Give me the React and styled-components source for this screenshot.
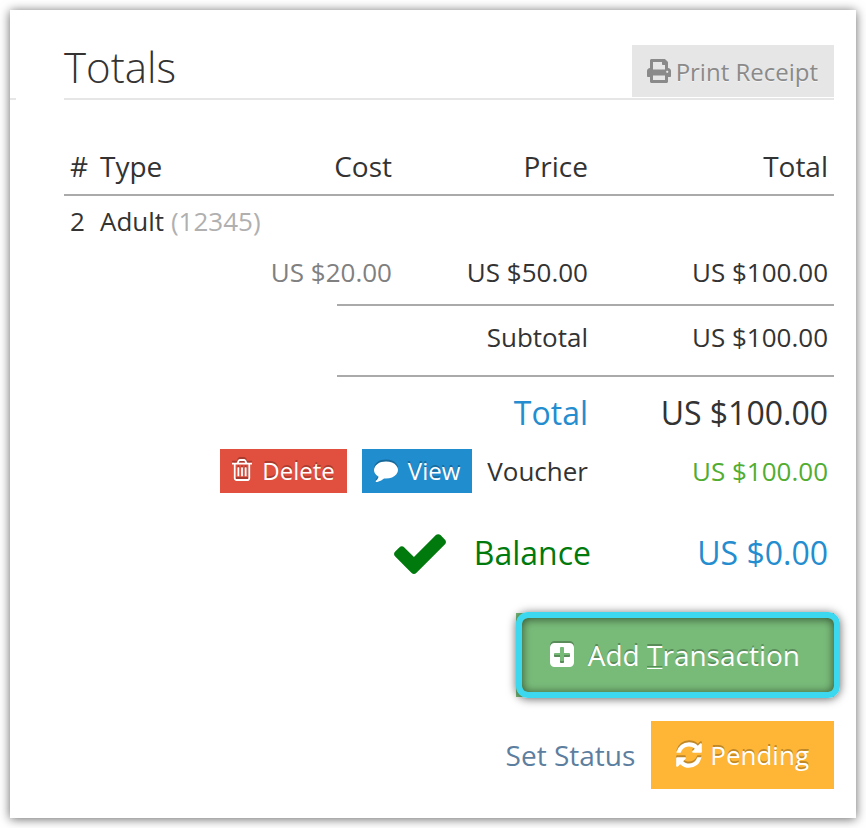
import React from "react";
import styled, { createGlobalStyle } from "styled-components";
import { FaPrint } from "react-icons/fa";

// drawn on a 1792 unit grid, x and w are the horizontal extent of the glyph
const ICONS = {
    trash: {
        x: 192,
        w: 1408,
        d: "M704 736v576q0 14-9 23t-23 9h-64q-14 0-23-9t-9-23v-576q0-14 9-23t23-9h64q14 0 23 9t9 23zm256 0v576q0 14-9 23t-23 9h-64q-14 0-23-9t-9-23v-576q0-14 9-23t23-9h64q14 0 23 9t9 23zm256 0v576q0 14-9 23t-23 9h-64q-14 0-23-9t-9-23v-576q0-14 9-23t23-9h64q14 0 23 9t9 23zm128 724v-948h-896v948q0 22 7 40.500t14.500 27 10.500 8.500h832q3 0 10.500-8.500t14.500-27 7-40.500zm-672-1076h448l-48-117q-7-9-17-11h-317q-10 2-17 11zm928 32v64q0 14-9 23t-23 9h-96v948q0 83-47 143.500t-113 60.500h-832q-66 0-113-58.500t-47-141.500v-952h-96q-14 0-23-9t-9-23v-64q0-14 9-23t23-9h309l70-167q15-37 54-63t79-26h320q40 0 79 26t54 63l70 167h309q14 0 23 9t9 23z",
    },
    comment: {
        x: 0,
        w: 1792,
        d: "M1792 896q0 174-120 321.500t-326 233-450 85.500q-70 0-145-8-198 175-460 242-49 14-114 22-17 2-30.500-9t-17.500-29v-1q-3-4-.5-12t2-10 4.500-9.500l6-9 7-8.500 8-9q7-8 31-34.500t34.500-38 31-39.500 32.500-51 27-59 26-76q-157-89-247.500-220t-90.500-281q0-130 71-248.500t191-204.500 286-136.500 348-50.500q244 0 450 85.500t326 233 120 321.500z",
    },
    check: {
        x: 0,
        w: 1792,
        d: "M1671 566q0 40-28 68l-724 724-136 136q-28 28-68 28t-68-28l-136-136-362-362q-28-28-28-68t28-68l136-136q28-28 68-28t68 28l294 295 656-657q28-28 68-28t68 28l136 136q28 28 28 68z",
    },
    plus: {
        x: 128,
        w: 1536,
        d: "M1408 960v-128q0-26-19-45t-45-19h-320v-320q0-26-19-45t-45-19h-128q-26 0-45 19t-19 45v320h-320q-26 0-45 19t-19 45v128q0 26 19 45t45 19h320v320q0 26 19 45t45 19h128q26 0 45-19t19-45v-320h320q26 0 45-19t19-45zm256-544v960q0 119-84.500 203.500t-203.500 84.500h-960q-119 0-203.500-84.500t-84.500-203.500v-960q0-119 84.500-203.500t203.500-84.500h960q119 0 203.500 84.500t84.500 203.500z",
    },
    refresh: {
        x: 128,
        w: 1536,
        d: "M1639 1056q0 5-1 7-64 268-268 434.500t-478 166.500q-146 0-282.500-55t-243.500-157l-129 129q-19 19-45 19t-45-19-19-45v-448q0-26 19-45t45-19h448q26 0 45 19t19 45-19 45l-137 137q71 66 161 102t187 36q134 0 250-65t186-179q11-17 53-117 8-23 30-23h192q13 0 22.500 9.500t9.500 22.500zm25-800v448q0 26-19 45t-45 19h-448q-26 0-45-19t-19-45 19-45l138-138q-148-137-349-137-134 0-250 65t-186 179q-11 17-53 117-8 23-30 23h-199q-13 0-22.500-9.500t-9.500-22.500v-7q65-268 270-434.500t480-166.500q146 0 284 55.500t245 156.500l130-129q19-19 45-19t45 19 19 45z",
    },
};

function Icon({ name, size }) {
    const { x, w, d } = ICONS[name];
    return (
        <IconSvg
            viewBox={`${x} 0 ${w} 1792`}
            width={Math.round((size * w) / 1792)}
            height={size}
            aria-hidden="true"
        >
            <path d={d} />
        </IconSvg>
    );
}

function App() {
    return (
        <>
            <GlobalStyle />
            <Panel>
                <PreviousSection />
                <Section>
                    <Header>
                        <Title>Totals</Title>
                        <PrintButton type="button">
                            <FaPrint size={24} aria-hidden="true" />
                            Print Receipt
                        </PrintButton>
                    </Header>

                    <Table>
                        <colgroup>
                            <Col $w={30} />
                            <col />
                            <Col $w={93} />
                            <Col $w={61} />
                            <Col $w={196} />
                            <Col $w={240} />
                        </colgroup>
                        <thead>
                            <tr>
                                <Th>#</Th>
                                <Th>Type</Th>
                                <Th colSpan={2} $right>Cost</Th>
                                <Th $right>Price</Th>
                                <Th $right>Total</Th>
                            </tr>
                        </thead>
                        <tbody>
                            <tr>
                                <Td $h={51}>2</Td>
                                <Td $h={51} colSpan={5}>Adult <Code>(12345)</Code></Td>
                            </tr>
                            <tr>
                                <Td $h={57} $bottom={8} colSpan={2} />
                                <Td $h={57} $bottom={8} $right $color="#808080" colSpan={2}>US $20.00</Td>
                                <Td $h={57} $bottom={8} $right>US $50.00</Td>
                                <Td $h={57} $bottom={8} $right>US $100.00</Td>
                            </tr>
                            <tr>
                                <Td $h={71} colSpan={3} />
                                <Td $h={71} $bottom={8} $line $right colSpan={2}>Subtotal</Td>
                                <Td $h={71} $bottom={8} $line $right>US $100.00</Td>
                            </tr>
                            <tr>
                                <Td $h={74} colSpan={3} />
                                <Td $h={74} $bottom={0} $line $right $big $color="#248dcf" colSpan={2}>Total</Td>
                                <Td $h={74} $bottom={0} $line $right $big>US $100.00</Td>
                            </tr>
                            <tr>
                                <Td $h={44} $bottom={0} $right colSpan={5}>
                                    <Actions>
                                        <SmallButton type="button" $bg="#e14f3f">
                                            <Icon name="trash" size={26} />
                                            Delete
                                        </SmallButton>
                                        <SmallButton type="button" $bg="#208dcf">
                                            <Icon name="comment" size={24} />
                                            View
                                        </SmallButton>
                                        Voucher
                                    </Actions>
                                </Td>
                                <Td $h={44} $bottom={0} $right $color="#51ad31">US $100.00</Td>
                            </tr>
                            <tr>
                                <Td $h={120} $bottom={0} $right $big $tight $color="#007a0c" colSpan={5}>
                                    <Balance>
                                        <Icon name="check" size={60} />
                                        Balance
                                    </Balance>
                                </Td>
                                <Td $h={120} $bottom={0} $right $big $color="#248dcf">US $0.00</Td>
                            </tr>
                        </tbody>
                    </Table>

                    <Footer>
                        <AddButton type="button">
                            <Icon name="plus" size={28} />
                            <span>Add <u>T</u>ransaction</span>
                            <Highlight />
                        </AddButton>
                        <StatusRow>
                            <StatusLink href="#status">Set Status</StatusLink>
                            <PendingButton type="button">
                                <Icon name="refresh" size={30} />
                                Pending
                            </PendingButton>
                        </StatusRow>
                    </Footer>
                </Section>
            </Panel>
        </>
    );
}

const GlobalStyle = createGlobalStyle`
    * {
        box-sizing: border-box;
    }

    body {
        margin: 0;
        padding: 10px;
        background: #fff;
        color: #333;
        font-family: "Open Sans", "Noto Sans", sans-serif;
        font-size: 26px;
    }

    button {
        border: 0;
        padding: 0;
        font-family: inherit;
        cursor: pointer;
    }
`;

const Panel = styled.div`
    display: flex;
    padding: 35px 22px 29px 0;
    background: #fff;
    box-shadow: 0 1px 10px rgba(0, 0, 0, 0.6);
`;

// right edge of the section to the left, only its rule is visible
const PreviousSection = styled.div`
    flex: none;
    width: 6px;
    height: 55px;
    margin-right: 48px;
    border-bottom: 2px solid #e6e6e6;
`;

const Section = styled.section`
    flex: 1;
    min-width: 0;
`;

const Header = styled.header`
    display: flex;
    justify-content: space-between;
    align-items: flex-start;
    height: 55px;
    border-bottom: 2px solid #e6e6e6;
`;

const Title = styled.h2`
    margin: 0;
    font-size: 42px;
    font-weight: 300;
    line-height: 44px;
`;

const IconSvg = styled.svg`
    flex: none;
    fill: currentColor;
`;

const PrintButton = styled.button`
    display: flex;
    align-items: center;
    gap: 5px;
    height: 52px;
    padding: 0 16px 0 15px;
    background: #e6e6e6;
    color: #8a8a8a;
    font-size: 24px;
    text-shadow: 0 1px 0 #f4f4f4;
`;

const Table = styled.table`
    width: 100%;
    margin-top: 40px;
    table-layout: fixed;
    border-spacing: 0;
`;

const Col = styled.col`
    width: ${({ $w }) => $w}px;
`;

const Th = styled.th`
    height: 56px;
    padding: 0 6px 2px;
    border-bottom: 2px solid #aaa;
    font-size: 28px;
    font-weight: 400;
    line-height: 36px;
    text-align: ${({ $right }) => ($right ? "right" : "left")};
    white-space: nowrap;
`;

const Td = styled.td`
    height: ${({ $h }) => $h}px;
    padding: 0 ${({ $tight }) => ($tight ? 3 : 6)}px ${({ $bottom = 2 }) => $bottom}px;
    border-top: ${({ $line }) => ($line ? "2px solid #aaa" : "0")};
    color: ${({ $color }) => $color || "inherit"};
    font-size: ${({ $big }) => ($big ? 32 : 26)}px;
    line-height: 36px;
    text-align: ${({ $right }) => ($right ? "right" : "left")};
    white-space: nowrap;
`;

const Code = styled.span`
    color: #b0b0b0;
`;

const Actions = styled.div`
    display: flex;
    justify-content: flex-end;
    align-items: center;
    gap: 15px;
`;

const SmallButton = styled.button`
    display: flex;
    align-items: center;
    gap: 10px;
    height: 44px;
    padding: 0 12px 2px;
    background: ${({ $bg }) => $bg};
    color: #fff;
    font-size: 24px;
    text-shadow: 0 -2px 0 rgba(0, 0, 0, 0.25);

    svg {
        filter: drop-shadow(0 -2px 0 rgba(0, 0, 0, 0.25));
    }
`;

const Balance = styled.div`
    display: flex;
    justify-content: flex-end;
    align-items: center;
    gap: 24px;
`;

const Footer = styled.div`
    display: flex;
    flex-direction: column;
    align-items: flex-end;
    gap: 24px;
`;

const AddButton = styled(SmallButton)`
    position: relative;
    gap: 14px;
    height: 84px;
    padding: 0 34px;
    background: #78bb79;
    font-size: 28px;

    u {
        text-decoration-thickness: 1px;
        text-underline-offset: 2px;
    }
`;

const Highlight = styled.span`
    position: absolute;
    inset: -1px -6px -1px 0;
    border: 6px solid #3bd8f0;
    border-radius: 12px;
    box-shadow: 0 1px 10px rgba(0, 0, 0, 0.6), inset 0 1px 10px rgba(0, 0, 0, 0.6);
    pointer-events: none;
`;

const StatusRow = styled.div`
    display: flex;
    align-items: center;
    gap: 16px;
`;

const StatusLink = styled.a`
    color: #5d7f9f;
    font-size: 28px;
    text-decoration: none;
`;

const PendingButton = styled(SmallButton)`
    gap: 8px;
    height: 68px;
    padding: 0 25px;
    background: #ffb536;
    font-size: 26px;
`;

export default App;
